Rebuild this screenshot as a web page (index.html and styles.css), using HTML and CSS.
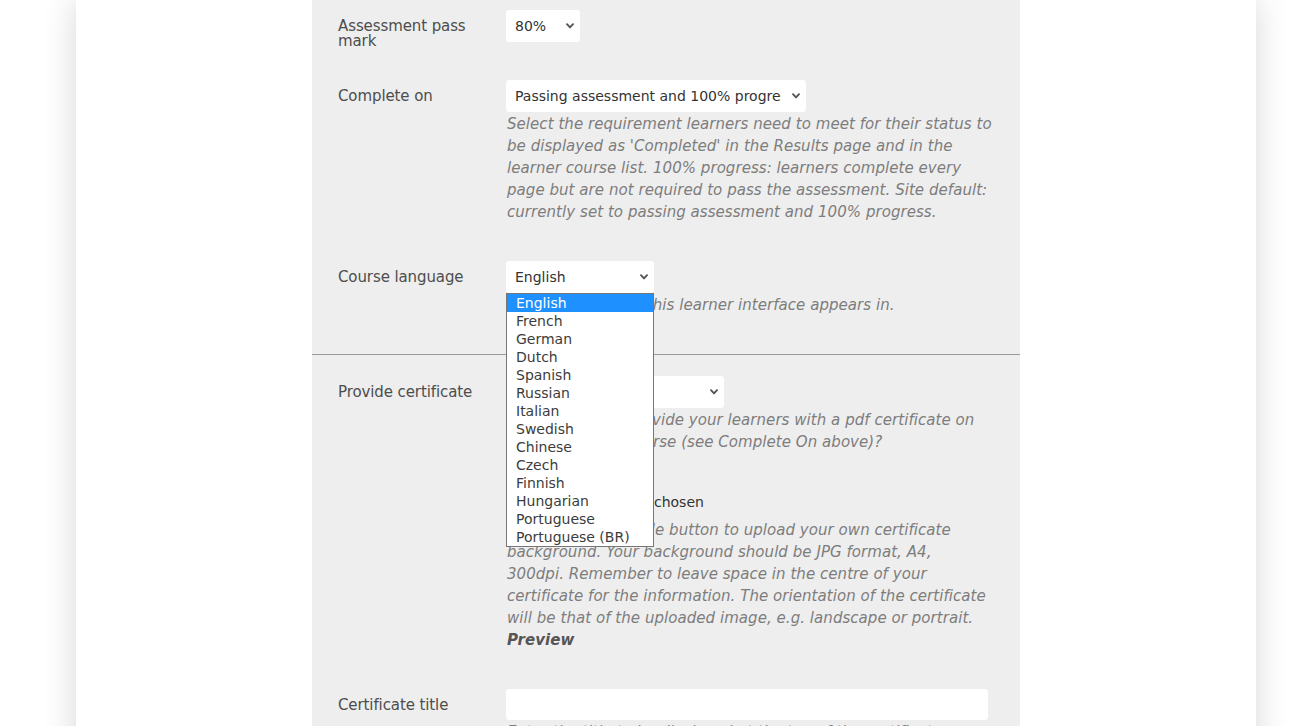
FILE: index.html
```html
<!DOCTYPE html>
<html lang="en">
<head>
<meta charset="utf-8">
<title>Course settings</title>
<link rel="stylesheet" href="styles.css">
</head>
<body>
<div class="page">
  <div class="panel">
    <section class="section">
      <div class="row">
        <label class="label">Assessment pass mark</label>
        <div class="field">
          <div class="select-wrap w-pass">
            <select class="select"><option>80%</option></select>
            <svg class="chev" width="8" height="6" viewBox="0 0 8 6"><path d="M1 1.2 L4 4.4 L7 1.2" fill="none" stroke="#555" stroke-width="1.9" stroke-linecap="round" stroke-linejoin="round"/></svg>
          </div>
        </div>
      </div>
      <div class="row">
        <label class="label">Complete on</label>
        <div class="field">
          <div class="select-wrap w-complete">
            <select class="select select-clip"><option>Passing assessment and 100% progress</option></select>
            <svg class="chev" width="8" height="6" viewBox="0 0 8 6"><path d="M1 1.2 L4 4.4 L7 1.2" fill="none" stroke="#555" stroke-width="1.9" stroke-linecap="round" stroke-linejoin="round"/></svg>
          </div>
          <p class="help">Select the requirement learners need to meet for their status to be displayed as 'Completed' in the Results page and in the learner course list. 100% progress: learners complete every page but are not required to pass the assessment. Site default: currently set to passing assessment and 100% progress.</p>
        </div>
      </div>
      <div class="row">
        <label class="label">Course language</label>
        <div class="field">
          <div class="select-wrap w-lang">
            <select class="select"><option>English</option></select>
            <svg class="chev" width="8" height="6" viewBox="0 0 8 6"><path d="M1 1.2 L4 4.4 L7 1.2" fill="none" stroke="#555" stroke-width="1.9" stroke-linecap="round" stroke-linejoin="round"/></svg>
            <ul class="dropdown">
              <li class="opt active">English</li>
              <li class="opt">French</li>
              <li class="opt">German</li>
              <li class="opt">Dutch</li>
              <li class="opt">Spanish</li>
              <li class="opt">Russian</li>
              <li class="opt">Italian</li>
              <li class="opt">Swedish</li>
              <li class="opt">Chinese</li>
              <li class="opt">Czech</li>
              <li class="opt">Finnish</li>
              <li class="opt">Hungarian</li>
              <li class="opt">Portuguese</li>
              <li class="opt">Portuguese (BR)</li>
            </ul>
          </div>
          <p class="help">Pick the language this learner interface appears in.</p>
        </div>
      </div>
    </section>
    <section class="section section-cert">
      <div class="row">
        <label class="label">Provide certificate</label>
        <div class="field">
          <div class="select-wrap w-cert">
            <select class="select"><option>Yes</option></select>
            <svg class="chev" width="8" height="6" viewBox="0 0 8 6"><path d="M1 1.2 L4 4.4 L7 1.2" fill="none" stroke="#555" stroke-width="1.9" stroke-linecap="round" stroke-linejoin="round"/></svg>
          </div>
          <p class="help">Do you want to provide your learners with a pdf certificate on completing the course (see Complete On above)?</p>
          <input class="file" type="file">
          <p class="help help-file">Click the Choose File button to upload your own certificate background. Your background should be JPG format, A4, 300dpi. Remember to leave space in the centre of your certificate for the information. The orientation of the certificate will be that of the uploaded image, e.g. landscape or portrait. <b class="preview">Preview</b></p>
        </div>
      </div>
      <div class="row">
        <label class="label">Certificate title</label>
        <div class="field">
          <input class="text" type="text">
          <p class="help">Enter the title to be displayed at the top of the certificate, e.g. Certificate of Completion.</p>
        </div>
      </div>
    </section>
  </div>
</div>
</body>
</html>
```

FILE: styles.css
```css
html, body {
  margin: 0;
  padding: 0;
  background: #ffffff;
}

body {
  font-family: "DejaVu Sans", Verdana, sans-serif;
  font-size: 15px;
  color: #4d4d4d;
  overflow: hidden;
}

.page {
  width: 1180px;
  margin: 0 0 0 76px;
  min-height: 1400px;
  background: #ffffff;
  box-shadow: 0 0 32px rgba(0, 0, 0, 0.16);
}

.panel {
  width: 708px;
  margin: 0 auto;
  background: #eeeeee;
  padding-top: 10px;
  min-height: 1400px;
}

.section-cert {
  border-top: 1px solid #9a9a9a;
  padding-top: 21px;
}

.row {
  display: grid;
  grid-template-columns: 150px 1fr;
  column-gap: 18px;
  padding: 0 26px;
  margin-bottom: 38px;
}

.label {
  box-sizing: border-box;
  height: 32px;
  padding-top: 9px;
  line-height: 15px;
  color: #4d4d4d;
  letter-spacing: -0.1px;
}

.field {
  min-width: 0;
}

.select-wrap {
  position: relative;
  height: 32px;
}

.w-pass { width: 74px; }
.w-complete { width: 300px; }
.w-lang { width: 148px; }
.w-cert { width: 218px; }

.select {
  display: block;
  box-sizing: border-box;
  width: 100%;
  height: 32px;
  border: none;
  border-radius: 3px;
  background-color: #ffffff;
  -webkit-appearance: none;
  appearance: none;
  font-family: "DejaVu Sans", Verdana, sans-serif;
  font-size: 14px;
  color: #333333;
  padding: 0 22px 0 9px;
  margin: 0;
  outline: none;
}

.select-clip {
  padding-right: 25px;
}

.chev {
  position: absolute;
  right: 6px;
  top: 13px;
  pointer-events: none;
}

.help {
  width: 485px;
  margin: 1px 0 0;
  font-style: italic;
  line-height: 22px;
  color: #7d7d7d;
  padding-left: 1px;
  letter-spacing: 0.05px;
}

.preview {
  display: block;
  color: #555555;
  font-weight: bold;
}

.file {
  display: block;
  margin-top: 38px;
  height: 24px;
  font-family: "DejaVu Sans", Verdana, sans-serif;
  font-size: 14px;
  color: #333333;
}

.file::file-selector-button {
  margin-right: 8px;
}

.help-file {
  margin-top: 4px;
}

.text {
  display: block;
  box-sizing: border-box;
  width: 482px;
  height: 31px;
  border: none;
  border-radius: 3px;
  background: #ffffff;
  margin: 0;
}

.dropdown {
  position: absolute;
  left: 0;
  top: 32px;
  z-index: 10;
  width: 148px;
  box-sizing: border-box;
  margin: 0;
  padding: 0;
  list-style: none;
  background: #ffffff;
  border: 1px solid #767676;
}

.opt {
  height: 18px;
  line-height: 18px;
  padding-left: 9px;
  font-size: 14px;
  color: #3c3c3c;
  white-space: nowrap;
}

.opt.active {
  background: #1e90ff;
  color: #ffffff;
}
```
